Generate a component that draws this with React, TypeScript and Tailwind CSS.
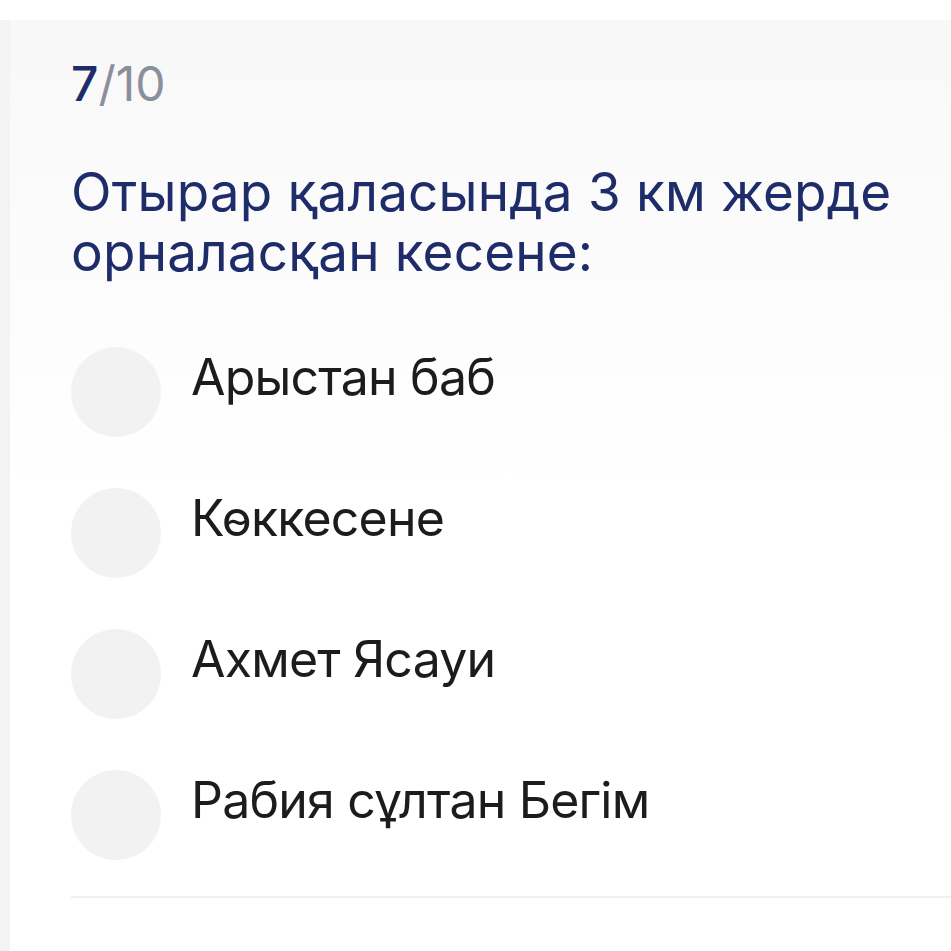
import React from "react";

const options = ["Арыстан баб", "Көккесене", "Ахмет Ясауи", "Рабия сұлтан Бегім"];

export default function App() {
  return (
    <div
      className="w-[951px] h-[951px] bg-white pt-[20px] overflow-hidden"
      style={{ fontFamily: "Inter, 'Noto Sans', sans-serif" }}
    >
      <div className="flex h-full">
        <div className="w-[10px] shrink-0 bg-[#f3f3f3]" />
        <div className="flex-1 bg-gradient-to-b from-[#f8f8f8] via-white to-white pl-[61px] pt-[40px]">
          <div className="text-[48px] leading-[48px]">
            <span className="text-[#1e2d6a] font-medium">7</span>
            <span className="text-[#8b8f9c]">/10</span>
          </div>
          <div className="mt-[54px] text-[53px] leading-[60px] text-[#1e2d6a] tracking-[0.2px]">
            Отырар қаласында 3 км жерде орналасқан кесене:
          </div>
          <div className="mt-[65px] flex flex-col gap-[51px]">
            {options.map((o) => (
              <div key={o} className="flex items-start gap-[30px]">
                <div className="w-[90px] h-[90px] rounded-full bg-[#f2f2f2] shrink-0" />
                <div className="text-[50px] leading-[60px] text-[#1c1c1e] tracking-[-0.8px]">{o}</div>
              </div>
            ))}
          </div>
          <div className="mt-[36px] h-[2px] bg-[#f0f0f0]" />
        </div>
      </div>
    </div>
  );
}
